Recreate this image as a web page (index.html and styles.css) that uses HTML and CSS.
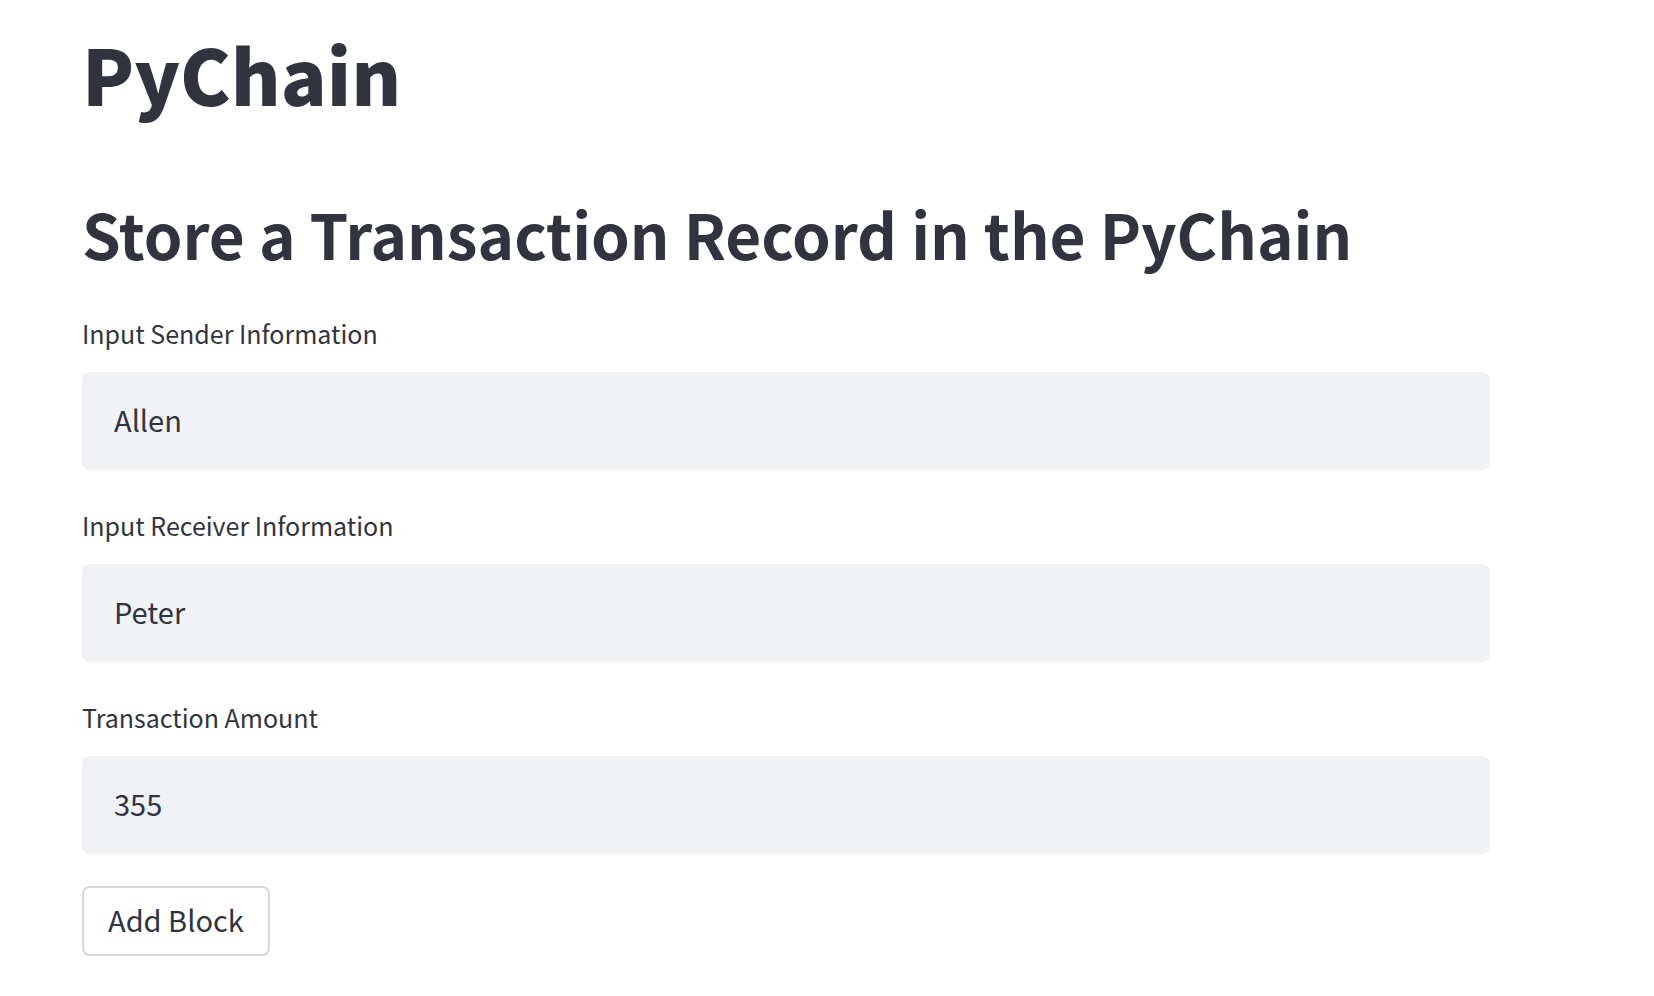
FILE: index.html
```html
<!DOCTYPE html>
<html lang="en">
<head>
<meta charset="utf-8">
<title>PyChain</title>
<link rel="stylesheet" href="styles.css">
</head>
<body>
<main class="page">
  <h1 class="title">PyChain</h1>
  <h2 class="subtitle">Store a Transaction Record in the PyChain</h2>
  <form class="form">
    <div class="field">
      <label class="label" for="sender">Input Sender Information</label>
      <input class="input" id="sender" type="text" value="Allen">
    </div>
    <div class="field">
      <label class="label" for="receiver">Input Receiver Information</label>
      <input class="input" id="receiver" type="text" value="Peter">
    </div>
    <div class="field">
      <label class="label" for="amount">Transaction Amount</label>
      <input class="input" id="amount" type="text" value="355">
    </div>
    <button class="button" type="button">Add Block</button>
  </form>
</main>
</body>
</html>
```
FILE: styles.css
```css
* {
  box-sizing: border-box;
}

body {
  margin: 0;
  background: #ffffff;
  color: #31333f;
  font-family: "Source Sans Pro", "Noto Sans CJK SC", sans-serif;
}

.page {
  padding: 20px 164px 40px 82px;
}

.title {
  margin: 0;
  font-size: 76px;
  font-weight: 900;
  line-height: 106px;
}

.subtitle {
  margin: 67px 0 0;
  font-size: 62px;
  font-weight: 600;
  line-height: 80px;
}

.form {
  display: flex;
  flex-direction: column;
  align-items: flex-start;
  gap: 32px;
  margin-top: 37px;
}

.field {
  display: flex;
  flex-direction: column;
  gap: 16px;
  width: 100%;
}

.label {
  font-size: 25px;
  line-height: 46px;
}

.input {
  width: 100%;
  height: 98px;
  padding: 0 32px 4px;
  border: 0;
  border-radius: 8px;
  background: #f0f2f6;
  color: inherit;
  font: inherit;
  font-size: 29px;
}

.button {
  height: 70px;
  padding: 0 24px 4px;
  border: 2px solid #d6d6d9;
  border-radius: 8px;
  background: #ffffff;
  color: inherit;
  font: inherit;
  font-size: 29px;
}
```
